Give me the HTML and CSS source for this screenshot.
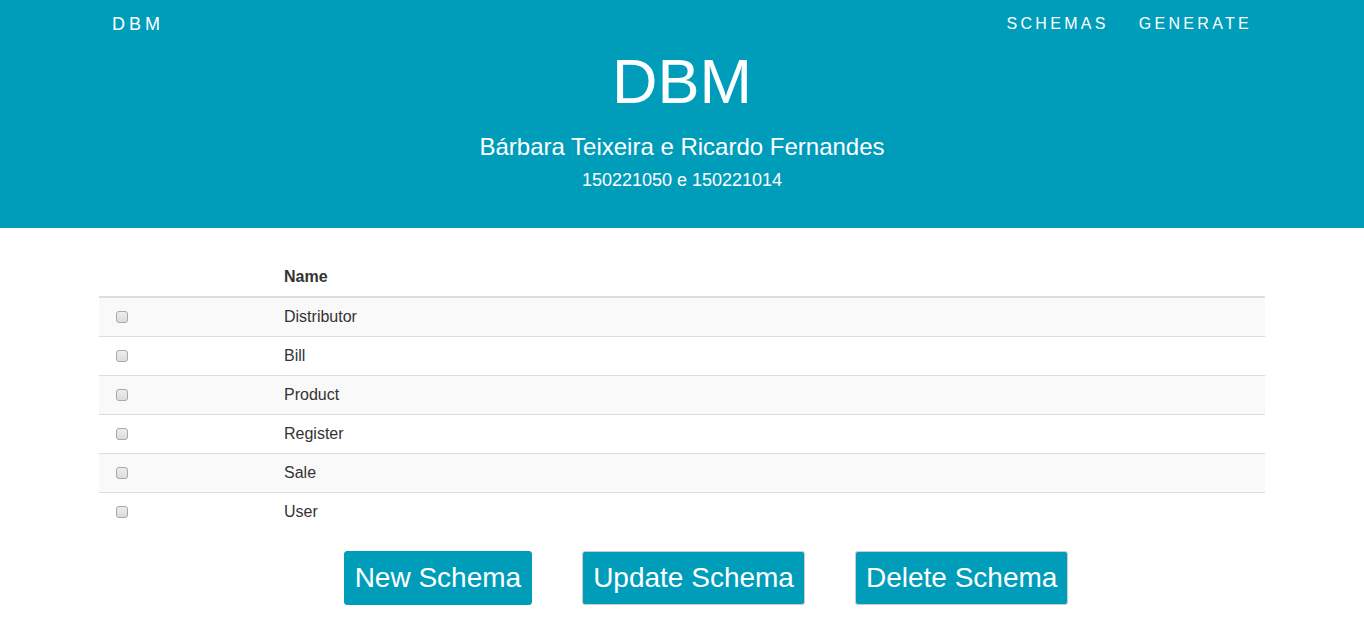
FILE: index.html
```html
<!DOCTYPE html>
<html lang="pt">
<head>
<meta charset="utf-8">
<title>DBM</title>
<link rel="stylesheet" href="styles.css">
</head>
<body>
<header class="hero">
  <nav class="navbar">
    <a class="brand" href="#">DBM</a>
    <ul class="nav-links">
      <li><a href="#">SCHEMAS</a></li>
      <li><a href="#">GENERATE</a></li>
    </ul>
  </nav>
  <h1 class="hero-title">DBM</h1>
  <p class="hero-sub">Bárbara Teixeira e Ricardo Fernandes</p>
  <p class="hero-ids">150221050 e 150221014</p>
</header>
<main class="content">
  <table class="schema-table">
    <colgroup>
      <col class="col-check">
      <col>
    </colgroup>
    <thead>
      <tr><th></th><th>Name</th></tr>
    </thead>
    <tbody>
      <tr><td class="cell-check"><input type="checkbox"></td><td>Distributor</td></tr>
      <tr><td class="cell-check"><input type="checkbox"></td><td>Bill</td></tr>
      <tr><td class="cell-check"><input type="checkbox"></td><td>Product</td></tr>
      <tr><td class="cell-check"><input type="checkbox"></td><td>Register</td></tr>
      <tr><td class="cell-check"><input type="checkbox"></td><td>Sale</td></tr>
      <tr><td class="cell-check"><input type="checkbox"></td><td>User</td></tr>
    </tbody>
  </table>
  <div class="actions">
    <button class="btn btn-primary">New Schema</button>
    <button class="btn btn-bordered">Update Schema</button>
    <button class="btn btn-bordered">Delete Schema</button>
  </div>
</main>
</body>
</html>
```
FILE: styles.css
```css
* { box-sizing: border-box; }
html, body { margin: 0; padding: 0; }
body {
  font-family: "Liberation Sans", Arial, sans-serif;
  color: #333;
  background: #fff;
}
.hero {
  background: #009dbb;
  color: #fff;
  text-align: center;
  padding-bottom: 35px;
}
.navbar {
  width: 1170px;
  margin: 0 auto;
  padding: 4px 15px 0;
  height: 44px;
  display: flex;
  align-items: center;
  justify-content: space-between;
}
.brand {
  color: #fff;
  text-decoration: none;
  font-size: 18px;
  letter-spacing: 4px;
}
.nav-links {
  list-style: none;
  margin: 0;
  padding: 0;
  display: flex;
  gap: 30px;
}
.nav-links a {
  color: #fff;
  text-decoration: none;
  font-size: 16px;
  letter-spacing: 3.3px;
}
.hero-title {
  margin: 0;
  font-size: 63px;
  font-weight: normal;
  line-height: 74px;
}
.hero-sub {
  margin: 12px 0 0;
  font-size: 24px;
  line-height: 34px;
}
.hero-ids {
  margin: 3px 0 0;
  font-size: 18px;
  line-height: 26px;
}
.content {
  width: 1166px;
  margin: 30px auto 0;
}
.schema-table {
  width: 100%;
  border-collapse: collapse;
  table-layout: fixed;
  font-size: 16px;
}
.col-check { width: 177px; }
.schema-table th,
.schema-table td {
  padding: 8px;
  line-height: 22px;
  text-align: left;
  vertical-align: middle;
}
.schema-table th {
  font-weight: bold;
  border-bottom: 2px solid #ddd;
}
.schema-table td {
  border-top: 1px solid #ddd;
}
.schema-table tbody tr:first-child td { border-top: 0; }
.schema-table tbody tr:nth-child(odd) { background: #f9f9f9; }
.cell-check { padding: 7px 8px 9px 13px !important; }
.cell-check input {
  -webkit-appearance: none;
  appearance: none;
  display: inline-block;
  margin: 0 0 0 4px;
  width: 12px;
  height: 12px;
  vertical-align: middle;
  border: 1px solid #a9a9a9;
  border-radius: 3px;
  background: linear-gradient(#ececec, #dcdcdc);
}
.actions {
  display: flex;
  justify-content: center;
  margin-top: 20px;
  padding-right: 2px;
}
.btn {
  margin-left: 50px;
  font-family: "Liberation Sans", Arial, sans-serif;
  font-size: 28px;
  line-height: 40px;
  padding: 6px 10px;
  color: #fff;
  background: #009dbb;
  border: 1px solid #009dbb;
  border-radius: 3px;
}
.btn-bordered { border-color: #ccc; }
```
